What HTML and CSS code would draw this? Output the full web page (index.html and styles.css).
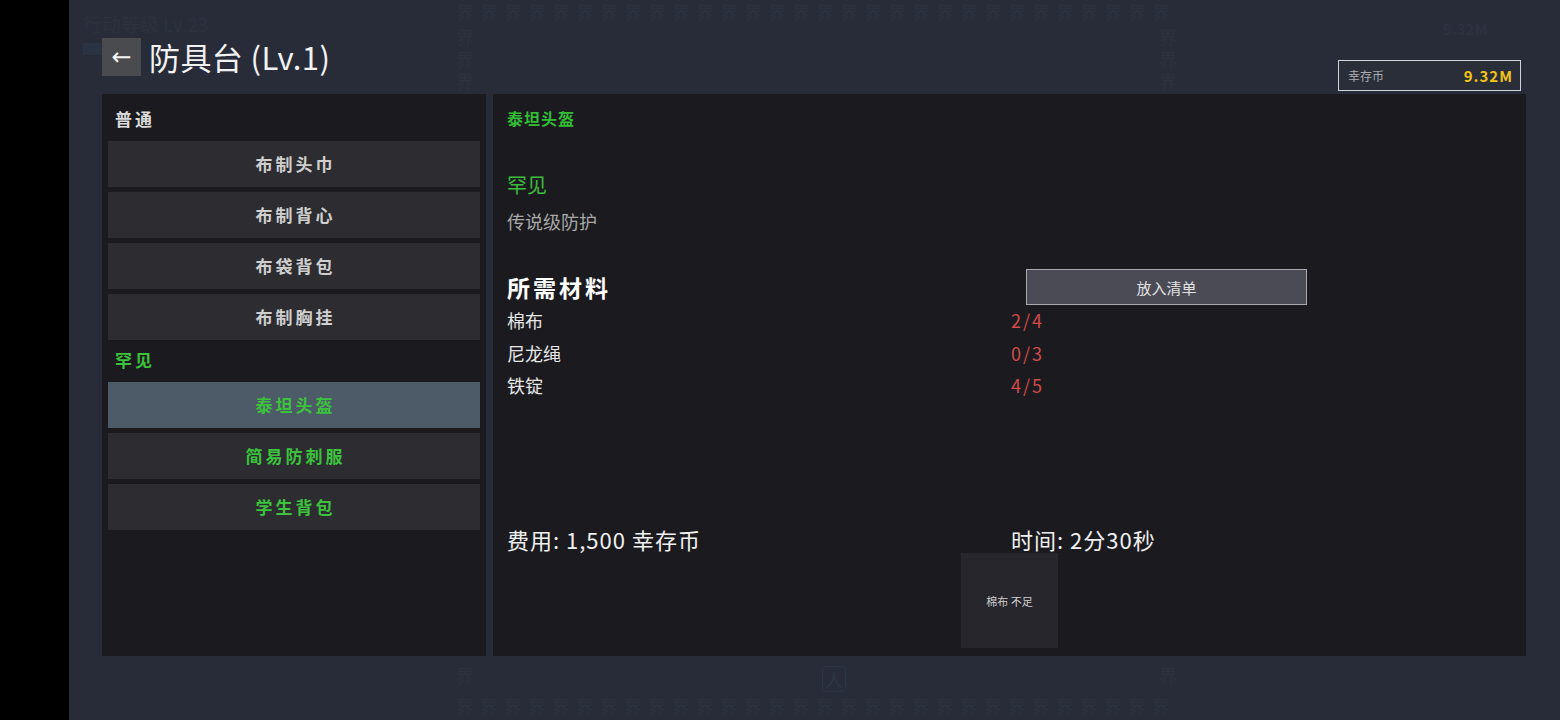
FILE: index.html
```html
<!DOCTYPE html>
<html lang="zh-CN">

<head>
    <meta charset="UTF-8">
    <meta name="viewport" content="width=device-width, initial-scale=1.0">
    <title>防具台</title>
    <link rel="stylesheet" href="styles.css">
</head>

<body>
    <div class="screen">
        <div class="notch"></div>
        <div class="game">
            <!-- faint map behind the crafting window -->
            <div class="ghost">
                <div class="ghost-level">行动等级 Lv.23</div>
                <div class="ghost-bar"></div>
                <div class="ghost-coins">9.32M</div>
                <div class="ghost-row ghost-top">界界界界界界界界界界界界界界界界界界界界界界界界界界界界界界</div>
                <div class="ghost-col ghost-col-left">界界界</div>
                <div class="ghost-col ghost-col-right">界界界</div>
                <div class="ghost-col ghost-col-left ghost-low">界</div>
                <div class="ghost-col ghost-col-right ghost-low">界</div>
                <div class="ghost-person">人</div>
                <div class="ghost-row ghost-bottom">界界界界界界界界界界界界界界界界界界界界界界界界界界界界界界</div>
            </div>

            <div class="app">
                <header class="topbar">
                    <div class="title-group">
                        <button class="back">←</button>
                        <h1>防具台 (Lv.1)</h1>
                    </div>
                    <div class="wallet">
                        <span class="wallet-label">幸存币</span>
                        <span class="wallet-value">9.32M</span>
                    </div>
                </header>

                <div class="panels">
                    <!-- Recipe list -->
                    <aside class="recipe-list">
                        <div class="group-title">普通</div>
                        <button class="recipe">布制头巾</button>
                        <button class="recipe">布制背心</button>
                        <button class="recipe">布袋背包</button>
                        <button class="recipe">布制胸挂</button>
                        <div class="group-title rare">罕见</div>
                        <button class="recipe rare active">泰坦头盔</button>
                        <button class="recipe rare">简易防刺服</button>
                        <button class="recipe rare">学生背包</button>
                    </aside>

                    <!-- Recipe details -->
                    <section class="detail">
                        <div class="item-name">泰坦头盔</div>
                        <div class="rarity">罕见</div>
                        <div class="desc">传说级防护</div>

                        <div class="mat-head">
                            <h2>所需材料</h2>
                            <button class="add-btn">放入清单</button>
                        </div>
                        <div class="mat-row"><span class="mat-name">棉布</span><span class="mat-count">2/4</span></div>
                        <div class="mat-row"><span class="mat-name">尼龙绳</span><span class="mat-count">0/3</span></div>
                        <div class="mat-row"><span class="mat-name">铁锭</span><span class="mat-count">4/5</span></div>

                        <div class="cost-row">
                            <span>费用: 1,500 幸存币</span>
                            <span>时间: 2分30秒</span>
                        </div>

                        <div class="tooltip">棉布 不足</div>
                    </section>
                </div>
            </div>
        </div>
    </div>
</body>

</html>
```

FILE: styles.css
```css
/* Whole screen */
body {
    margin: 0;
    background-color: black;
    font-family: "Noto Sans CJK SC", "Noto Sans", sans-serif;
}

.screen {
    display: flex;
    width: 1560px;
    height: 720px;
    overflow: hidden;
}

.notch {
    width: 69px;
    background-color: #000;
}

.game {
    flex: 1;
    position: relative;
    background-color: #272c38;
}

/* Faint map behind the window */
.ghost {
    position: absolute;
    inset: 0;
    color: #2c313e;
    overflow: hidden;
}

.ghost-level {
    position: absolute;
    left: 14px;
    top: 12px;
    font-size: 19px;
    line-height: 24px;
}

.ghost-bar {
    position: absolute;
    left: 14px;
    top: 43px;
    width: 20px;
    height: 12px;
    background-color: #2a3343;
}

.ghost-coins {
    position: absolute;
    left: 1374px;
    top: 19px;
    font-size: 15px;
    font-weight: bold;
    line-height: 20px;
}

.ghost-row {
    position: absolute;
    left: 387px;
    font-size: 18px;
    line-height: 20px;
    letter-spacing: 6px;
    white-space: nowrap;
}

.ghost-top {
    top: 2px;
}

.ghost-bottom {
    top: 696px;
}

.ghost-col {
    position: absolute;
    top: 26px;
    width: 22px;
    font-size: 18px;
    line-height: 22px;
}

.ghost-col-left {
    left: 387px;
}

.ghost-col-right {
    left: 1090px;
}

.ghost-low {
    top: 664px;
}

.ghost-person {
    position: absolute;
    left: 753px;
    top: 666px;
    width: 22px;
    height: 24px;
    border: 1px solid #2c3543;
    border-radius: 4px;
    font-size: 18px;
    line-height: 24px;
    text-align: center;
    color: #2c3543;
}

/* Window */
.app {
    position: relative;
    padding: 38px 34px 0 33px;
}

.topbar {
    display: flex;
    justify-content: space-between;
    align-items: flex-start;
    height: 56px;
}

.title-group {
    display: flex;
    align-items: center;
    gap: 8px;
}

.back {
    width: 39px;
    height: 38px;
    padding: 0;
    border: none;
    background-color: #4a4b4e;
    color: #f2f2f2;
    font-family: "DejaVu Sans", sans-serif;
    font-size: 24px;
    line-height: 38px;
}

.topbar h1 {
    margin: 0;
    font-size: 31px;
    font-weight: normal;
    line-height: 38px;
    letter-spacing: 0.4px;
    color: #f2f2f2;
}

.wallet {
    display: flex;
    justify-content: space-between;
    align-items: center;
    box-sizing: border-box;
    width: 183px;
    height: 31px;
    margin-top: 22px;
    margin-right: 5px;
    padding: 0 7px 0 9px;
    border: 1px solid #cfd2d6;
    background-color: #292e39;
}

.wallet-label {
    font-size: 12px;
    color: #a9abb0;
}

.wallet-value {
    font-size: 15px;
    font-weight: bold;
    letter-spacing: 1px;
    color: #f2c417;
}

.panels {
    display: flex;
    gap: 7px;
    height: 562px;
}

/* Recipe list */
.recipe-list {
    width: 384px;
    box-sizing: border-box;
    padding: 5px 6px 0;
    background-color: #1b1b1f;
}

.group-title {
    padding: 5px 7px 2px;
    font-size: 17px;
    font-weight: bold;
    line-height: 30px;
    letter-spacing: 3px;
    color: #dcdcdc;
}

.group-title.rare {
    color: #3cc23c;
}

.recipe {
    display: block;
    width: 100%;
    height: 46px;
    margin-top: 5px;
    padding-bottom: 2px;
    border: none;
    background-color: #2c2c31;
    color: #cfcfcf;
    font-family: inherit;
    font-size: 17px;
    font-weight: bold;
    letter-spacing: 3px;
    text-indent: 3px;
}

.recipe.rare {
    color: #3cc23c;
}

.recipe.active {
    background-color: #4d5a67;
}

/* Recipe details */
.detail {
    flex: 1;
    position: relative;
    padding: 12px 11px 0 14px;
    background-color: #1b1b1f;
}

.item-name {
    font-size: 16px;
    font-weight: bold;
    line-height: 24px;
    letter-spacing: 1px;
    color: #33bd36;
}

.rarity {
    margin-top: 37px;
    font-size: 20px;
    line-height: 36px;
    color: #3dbb3d;
}

.desc {
    font-size: 18px;
    line-height: 36px;
    color: #a9a9a9;
}

.mat-head {
    display: grid;
    grid-template-columns: 1fr 1fr;
    align-items: center;
    height: 35px;
    margin-top: 30px;
}

.mat-head h2 {
    margin: 0;
    font-size: 23px;
    letter-spacing: 3px;
    color: #ffffff;
}

.add-btn {
    width: 281px;
    height: 36px;
    margin-left: 15px;
    border: 1px solid #a8a8ad;
    background-color: #4b4b56;
    color: #e2e2e2;
    font-family: inherit;
    font-size: 15px;
}

.mat-row {
    display: grid;
    grid-template-columns: 1fr 1fr;
    font-size: 18px;
    line-height: 32.5px;
}

.mat-name {
    color: #e6e6e6;
}

.mat-count {
    letter-spacing: 2px;
    color: #d24a4a;
}

.cost-row {
    display: grid;
    grid-template-columns: 1fr 1fr;
    margin-top: 122px;
    font-size: 22px;
    line-height: 30px;
    letter-spacing: 1px;
    color: #f0f0f0;
}

/* "not enough" hint over the panel */
.tooltip {
    position: absolute;
    left: 468px;
    top: 459px;
    width: 97px;
    height: 95px;
    display: flex;
    align-items: center;
    justify-content: center;
    background-color: #26262c;
    font-size: 11px;
    color: #cfcfcf;
}
```
